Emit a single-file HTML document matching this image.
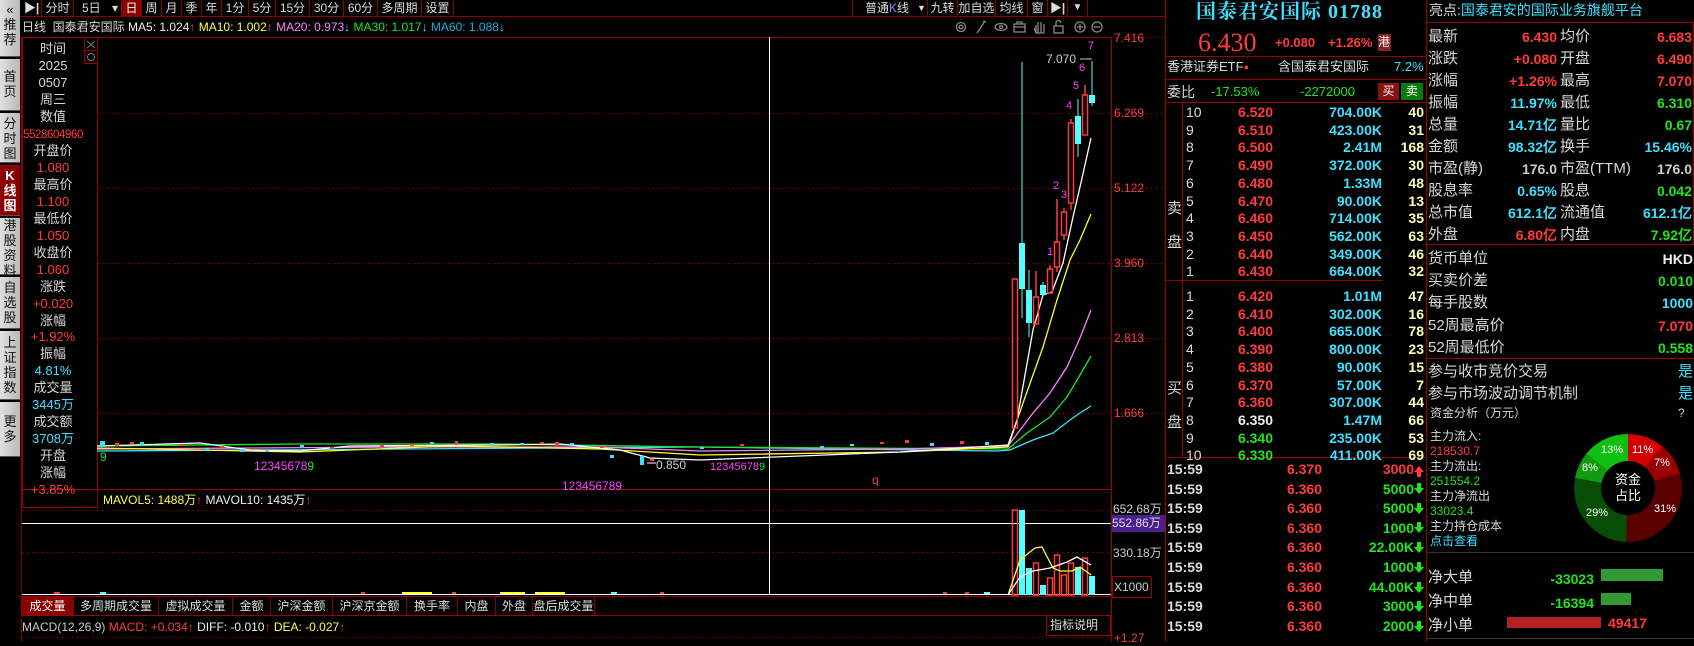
<!DOCTYPE html>
<html><head><meta charset="utf-8"><style>
*{margin:0;padding:0;box-sizing:border-box}
body{width:1694px;height:642px;background:#000;overflow:hidden;position:relative;font-family:"Liberation Sans","Noto Sans CJK SC",sans-serif;font-size:13px;color:#d8d8d8}
.a{position:absolute;white-space:nowrap;line-height:16px}
.r{text-align:right}
.c{text-align:center}
.red{color:#ff3b3b}.grn{color:#1ee61e}.cyn{color:#3de0ff}.yel{color:#ffff40}.wht{color:#f0f0f0}.pnk{color:#ff80ff}.mag{color:#ff40ff}.cnt{color:#ffffb8}
.nav{position:absolute;left:0;width:20px;background:linear-gradient(90deg,#e0e0e0,#b8b8b8);color:#111;font-size:13px;line-height:15px;text-align:center;padding-top:6px;border-bottom:1px solid #555}
.tb{position:absolute;top:0;height:16px;line-height:16px;border-right:1px solid #800;text-align:center;font-size:12px;color:#ddd;white-space:nowrap;overflow:hidden}
.tab{position:absolute;top:597px;height:18px;line-height:18px;border-right:1px solid #800;text-align:center;font-size:12px;color:#ddd}
.ob{font-size:14px;font-weight:bold;font-family:"Liberation Sans",sans-serif}
.rp{font-size:15px}
</style></head><body>

<div class="nav" style="top:0;height:57px;padding-top:2px">«<br>推<br>荐</div>
<div class="nav" style="top:59px;height:52px;padding-top:10px">首<br>页</div>
<div class="nav" style="top:113px;height:50px;padding-top:3px">分<br>时<br>图</div>
<div class="nav" style="top:165px;height:51px;padding-top:3px;background:#8b0000;color:#fff;font-weight:bold">K<br>线<br>图</div>
<div class="nav" style="top:218px;height:57px;padding-top:0px">港<br>股<br>资<br>料</div>
<div class="nav" style="top:277px;height:52px;padding-top:3px">自<br>选<br>股</div>
<div class="nav" style="top:331px;height:69px;padding-top:4px">上<br>证<br>指<br>数</div>
<div class="nav" style="top:402px;height:55px;padding-top:12px">更<br>多</div>

<svg class="a" style="left:0;top:0" width="1694" height="642">
<line x1="20" y1="16.5" x2="1165" y2="16.5" stroke="#800" />
<line x1="21.5" y1="37" x2="21.5" y2="642" stroke="#800"/>
<line x1="1111.5" y1="37" x2="1111.5" y2="642" stroke="#900"/>
<line x1="1165.5" y1="0" x2="1165.5" y2="642" stroke="#900"/>
<line x1="1426.5" y1="0" x2="1426.5" y2="642" stroke="#900"/>
<line x1="21" y1="37.5" x2="1111" y2="37.5" stroke="#800"/>
<line x1="21" y1="489.5" x2="1111" y2="489.5" stroke="#900"/>
<line x1="21" y1="596.5" x2="1111" y2="596.5" stroke="#900"/>
<line x1="21" y1="615.5" x2="1111" y2="615.5" stroke="#900"/>
<rect x="22.5" y="37.5" width="75" height="470" fill="none" stroke="#900"/>
<rect x="84.5" y="37.5" width="13" height="13" fill="none" stroke="#900"/>
<rect x="84.5" y="50.5" width="13" height="13" fill="none" stroke="#900"/>
<path d="M87 41 L95 48 M95 41 L87 48" stroke="#777"/>
<circle cx="91" cy="57" r="3.5" fill="none" stroke="#777"/>
<g stroke="#900" stroke-dasharray="1.5 3.5">
<line x1="98" y1="113.5" x2="1111" y2="113.5"/><line x1="98" y1="188.5" x2="1111" y2="188.5"/>
<line x1="98" y1="263.5" x2="1111" y2="263.5"/><line x1="98" y1="338.5" x2="1111" y2="338.5"/>
<line x1="98" y1="413.5" x2="1111" y2="413.5"/>
<line x1="22" y1="510.5" x2="1111" y2="510.5"/><line x1="22" y1="552.5" x2="1111" y2="552.5"/>
<line x1="22" y1="637.5" x2="1111" y2="637.5"/>
<line x1="1111" y1="37.5" x2="1165" y2="37.5"/><line x1="1111" y1="113.5" x2="1165" y2="113.5"/>
<line x1="1111" y1="188.5" x2="1165" y2="188.5"/><line x1="1111" y1="263.5" x2="1165" y2="263.5"/>
<line x1="1111" y1="338.5" x2="1165" y2="338.5"/><line x1="1111" y1="413.5" x2="1165" y2="413.5"/>
</g>
<line x1="769.5" y1="37" x2="769.5" y2="595" stroke="#fff"/>
<line x1="22" y1="523.5" x2="1111" y2="523.5" stroke="#fff"/>
<line x1="22" y1="594.5" x2="1111" y2="594.5" stroke="#fff"/>
<g fill="none" stroke-width="1.3">
<polyline stroke="#3de0ff" points="97,451 400,449 700,447 997,451 1010,450 1033,440 1053,433 1070,420 1080,413 1091,406"/>
<polyline stroke="#1ee61e" points="97,446 300,444 500,444 700,447 1008,449 1027,433 1050,417 1067,397 1080,375 1091,356"/>
<polyline stroke="#ff80ff" points="97,449 250,448 400,447 600,447 700,451 900,449 1008,446 1033,413 1050,393 1067,367 1080,338 1091,310"/>
<polyline stroke="#ffff30" points="97,448 250,451 300,452 450,446 600,449 700,455 900,452 1008,447 1023,403 1043,347 1057,300 1070,260 1080,240 1091,214"/>
<polyline stroke="#fff" points="97,446 200,443 250,450 300,451 350,446 500,445 560,444 620,450 650,458 700,460 800,456 900,452 1008,445 1017,420 1033,330 1043,295 1052,292 1063,263 1073,217 1080,187 1091,138"/>
</g>
<g fill="#ff3b3b">
<rect x="115" y="443" width="4" height="3"/><rect x="130" y="442" width="4" height="2"/><rect x="180" y="444" width="4" height="2"/>
<rect x="220" y="446" width="4" height="2"/><rect x="330" y="447" width="4" height="2"/><rect x="380" y="445" width="4" height="2"/>
<rect x="410" y="444" width="4" height="2"/><rect x="455" y="441" width="3" height="4"/><rect x="540" y="442" width="4" height="2"/>
<rect x="555" y="442" width="4" height="4"/><rect x="600" y="446" width="4" height="2"/><rect x="650" y="459" width="4" height="2"/>
<rect x="740" y="444" width="4" height="2"/><rect x="880" y="442" width="4" height="2"/><rect x="905" y="440" width="4" height="3"/><rect x="960" y="441" width="4" height="3"/>
</g>
<g fill="#3de0ff">
<rect x="100" y="441" width="5" height="6"/><rect x="140" y="442" width="4" height="3"/><rect x="205" y="448" width="4" height="3"/>
<rect x="240" y="449" width="5" height="3"/><rect x="265" y="450" width="4" height="2"/><rect x="300" y="445" width="4" height="2"/>
<rect x="430" y="442" width="4" height="2"/><rect x="490" y="443" width="4" height="2"/><rect x="520" y="443" width="4" height="2"/>
<rect x="570" y="443" width="4" height="2"/><rect x="610" y="455" width="4" height="3"/><rect x="640" y="456" width="4" height="9"/>
<rect x="700" y="447" width="4" height="2"/><rect x="820" y="446" width="4" height="2"/><rect x="850" y="444" width="4" height="2"/>
<rect x="930" y="443" width="4" height="3"/><rect x="985" y="442" width="4" height="3"/>
</g>
<line x1="647" y1="463" x2="656" y2="463" stroke="#fff"/>
<g stroke="#ff3b3b" fill="none" stroke-width="1.5">
<rect x="1012.5" y="279" width="5" height="149"/>
<rect x="1033.5" y="297" width="5" height="27"/><line x1="1036" y1="271" x2="1036" y2="297"/>
<rect x="1047.5" y="269" width="5" height="24"/><line x1="1050" y1="265" x2="1050" y2="269"/>
<rect x="1054.5" y="242" width="5" height="25"/><line x1="1057" y1="199" x2="1057" y2="242"/><line x1="1057" y1="267" x2="1057" y2="272"/>
<rect x="1061.5" y="212" width="5" height="23"/><line x1="1064" y1="208" x2="1064" y2="212"/><line x1="1064" y1="235" x2="1064" y2="240"/>
<rect x="1068.5" y="123" width="5" height="80"/><line x1="1071" y1="119" x2="1071" y2="123"/><line x1="1071" y1="203" x2="1071" y2="210"/>
<rect x="1082.5" y="95" width="5" height="40"/><line x1="1085" y1="85" x2="1085" y2="95"/>
</g>
<g fill="#5ff">
<rect x="1019" y="243" width="6" height="46"/><rect x="1021.5" y="62" width="1" height="256"/>
<rect x="1026" y="290" width="6" height="33"/><rect x="1028.5" y="270" width="1" height="67"/>
<rect x="1040" y="285" width="6" height="10"/><rect x="1042.5" y="282" width="1" height="14"/>
<rect x="1075" y="116" width="6" height="28"/><rect x="1077.5" y="99" width="1" height="58"/>
<rect x="1089" y="95" width="6" height="8"/><rect x="1091.5" y="61" width="1" height="45"/>
</g>
<line x1="1080" y1="59" x2="1092" y2="59" stroke="#ccc"/>
<g stroke="#ff3b3b" fill="none" stroke-width="1.5">
<rect x="1012.5" y="510" width="5" height="85"/><rect x="1033.5" y="563" width="5" height="32"/>
<rect x="1047.5" y="578" width="5" height="17"/><rect x="1054.5" y="555" width="5" height="40"/>
<rect x="1061.5" y="575" width="5" height="20"/><rect x="1068.5" y="563" width="5" height="32"/><rect x="1082.5" y="558" width="5" height="37"/>
</g>
<g fill="#5ff">
<rect x="1019" y="510" width="6" height="85"/><rect x="1026" y="568" width="6" height="27"/><rect x="1040" y="585" width="6" height="10"/>
<rect x="1075" y="567" width="6" height="28"/><rect x="1089" y="576" width="6" height="19"/>
</g>
<g fill="#ff3b3b"><rect x="54" y="592" width="6" height="2"/><rect x="361" y="592" width="4" height="2"/><rect x="452" y="592" width="4" height="2"/><rect x="660" y="592" width="4" height="2"/><rect x="943" y="592" width="4" height="2"/><rect x="965" y="592" width="4" height="2"/></g>
<g fill="#ffff30"><rect x="402" y="592" width="30" height="2"/><rect x="500" y="592" width="25" height="2"/><rect x="535" y="592" width="30" height="2"/></g>
<g fill="#5ff"><rect x="100" y="592" width="6" height="2"/><rect x="611" y="592" width="6" height="2"/><rect x="984" y="592" width="6" height="2"/></g>
<polyline fill="none" stroke="#ffff30" stroke-width="1.3" points="1008,595 1020,560 1035,548 1042,547 1053,568 1060,571 1072,571 1080,567 1091,575"/>
<polyline fill="none" stroke="#fff" stroke-width="1.3" points="1008,595 1020,577 1033,571 1050,568 1067,562 1077,557 1091,565"/>
<g fill="none" stroke="#888" stroke-width="1.3">
<circle cx="961" cy="27" r="4.5"/><circle cx="961" cy="27" r="1.8"/>
<path d="M977 33 L985 21 M983 21 L986 22"/>
<ellipse cx="1001" cy="27" rx="6" ry="3.5"/><circle cx="1001" cy="27" r="1.5"/>
<rect x="1014" y="24" width="11" height="8"/><path d="M1017 24 v-2 h5 v2 M1014 27 h11"/>
<path d="M1036 33 v-8 M1038 33 v-11 M1041 33 v-11 M1044 33 v-9 M1034 28 l2 5 h8"/>
<rect x="1054" y="26" width="9" height="7"/><path d="M1056 26 v-3 a2.5 2.5 0 0 1 5 0"/>
<circle cx="1080" cy="27" r="5"/><path d="M1077 27 h6 M1080 24 v6"/>
<circle cx="1097" cy="27" r="5"/><path d="M1094 27 h6"/>
</g>
<g stroke="#900" fill="none">
<line x1="1165" y1="56.5" x2="1426" y2="56.5"/><line x1="1165" y1="79.5" x2="1426" y2="79.5"/><line x1="1165" y1="102.5" x2="1426" y2="102.5"/>
<line x1="1182.5" y1="103" x2="1182.5" y2="457"/><line x1="1165" y1="280.5" x2="1383" y2="280.5"/><line x1="1165" y1="457.5" x2="1426" y2="457.5"/>
<line x1="1426" y1="22.5" x2="1694" y2="22.5"/><rect x="1426.5" y="22.5" width="267" height="222"/>
<line x1="1426" y1="358.5" x2="1694" y2="358.5"/>
<line x1="1111" y1="516.5" x2="1165" y2="516.5"/><rect x="1112.5" y="576.5" width="39" height="21"/>
<rect x="1046.5" y="615.5" width="64" height="20"/>
</g>
<g stroke="#333"><line x1="1426" y1="552.5" x2="1694" y2="552.5"/><line x1="1426" y1="638.5" x2="1694" y2="638.5"/></g>
<g transform="translate(1628,488)">
<path d="M0 -54 A54 54 0 0 1 34.4 -41.6 L17.2 -20.8 A27 27 0 0 0 0 -27 Z" fill="#d40000"/>
<path d="M34.4 -41.6 A54 54 0 0 1 52.0 -14.6 L26 -7.3 A27 27 0 0 0 17.2 -20.8 Z" fill="#9a0000"/>
<path d="M52.0 -14.6 A54 54 0 0 1 -1.7 54 L-0.85 27 A27 27 0 0 0 26 -7.3 Z" fill="#5a0000"/>
<path d="M-1.7 54 A54 54 0 0 1 -53 -10.1 L-26.5 -5 A27 27 0 0 0 -0.85 27 Z" fill="#064d06"/>
<path d="M-53 -10.1 A54 54 0 0 1 -41.6 -34.4 L-20.8 -17.2 A27 27 0 0 0 -26.5 -5 Z" fill="#119a11"/>
<path d="M-41.6 -34.4 A54 54 0 0 1 0 -54 L0 -27 A27 27 0 0 0 -20.8 -17.2 Z" fill="#10c010"/>
</g>
<rect x="1601" y="569" width="62" height="12" fill="#339933"/>
<rect x="1601" y="593" width="30" height="12" fill="#339933"/>
<rect x="1507" y="617" width="94" height="11" fill="#b22222"/>
<g fill="#ff3b3b"><path d="M1414 472 l5 -6 l5 6 h-3 v5 h-4 v-5z"/></g>
<g fill="#1ee61e">
<path d="M1414 488 l5 6 l5 -6 h-3 v-5 h-4 v5z"/>
<path d="M1414 508 l5 6 l5 -6 h-3 v-5 h-4 v5z"/>
<path d="M1414 527 l5 6 l5 -6 h-3 v-5 h-4 v5z"/>
<path d="M1414 547 l5 6 l5 -6 h-3 v-5 h-4 v5z"/>
<path d="M1414 567 l5 6 l5 -6 h-3 v-5 h-4 v5z"/>
<path d="M1414 587 l5 6 l5 -6 h-3 v-5 h-4 v5z"/>
<path d="M1414 606 l5 6 l5 -6 h-3 v-5 h-4 v5z"/>
<path d="M1414 626 l5 6 l5 -6 h-3 v-5 h-4 v5z"/>
</g>
</svg>

<div class="tb" style="left:22px;width:20px;font-weight:bold">▶|</div>
<div class="tb" style="left:42px;width:32px">分时</div>
<div class="tb" style="left:74px;width:48px;text-align:left;padding-left:8px">5日 <span style="padding-left:8px">▾</span></div>
<div class="tb" style="left:122px;width:20px;background:#8b0000;color:#fff">日</div>
<div class="tb" style="left:142px;width:20px">周</div>
<div class="tb" style="left:162px;width:20px">月</div>
<div class="tb" style="left:182px;width:20px">季</div>
<div class="tb" style="left:202px;width:20px">年</div>
<div class="tb" style="left:222px;width:27px">1分</div>
<div class="tb" style="left:249px;width:27px">5分</div>
<div class="tb" style="left:276px;width:34px">15分</div>
<div class="tb" style="left:310px;width:34px">30分</div>
<div class="tb" style="left:344px;width:34px">60分</div>
<div class="tb" style="left:378px;width:44px">多周期</div>
<div class="tb" style="left:422px;width:32px">设置</div>
<div class="tb" style="left:852px;width:76px;border-left:1px solid #800;text-align:left;padding-left:12px">普通<span style="color:#88f">K</span>线</div>
<div class="a" style="left:917px;top:0;font-size:9px;color:#ddd">▼</div>
<div class="tb" style="left:928px;width:30px">九转</div>
<div class="tb" style="left:958px;width:38px">加自选</div>
<div class="tb" style="left:996px;width:32px">均线</div>
<div class="tb" style="left:1028px;width:20px">窗</div>
<div class="tb" style="left:1048px;width:20px;font-weight:bold">▶|</div>
<div class="tb" style="left:1068px;width:20px;font-size:10px">▼</div>

<div class="a" style="left:22px;top:19px;font-size:12px">日线 &nbsp;国泰君安国际 <span class="wht">MA5: 1.024</span><span class="red">↑</span> <span class="yel">MA10: 1.002</span><span class="red">↑</span> <span class="pnk">MA20: 0.973</span><span class="cyn">↓</span> <span class="grn">MA30: 1.017</span><span class="cyn">↓</span> <span style="color:#2ad">MA60: 1.088</span><span class="cyn">↓</span></div>

<div class="a c" style="left:22px;top:41px;width:62px;line-height:16.9px;font-size:13px">
时间<br>2025<br>0507<br>周三<br>数值<br><span class="red" style="font-size:11.5px;letter-spacing:-0.4px;display:inline-block;width:74px;margin-left:-6px;margin-right:-6px">5528604960</span><br>开盘价<br><span class="red">1.080</span><br>最高价<br><span class="red">1.100</span><br>最低价<br><span class="red">1.050</span><br>收盘价<br><span class="red">1.060</span><br>涨跌<br><span class="red">+0.020</span><br>涨幅<br><span class="red">+1.92%</span><br>振幅<br><span class="cyn">4.81%</span><br>成交量<br><span class="cyn">3445万</span><br>成交额<br><span class="cyn">3708万</span><br>开盘<br>涨幅<br><span class="red">+3.85%</span></div>

<div class="a grn" style="left:100px;top:449px;font-size:12px">9</div>
<div class="a" style="left:254px;top:458px;font-size:12px"><span class="mag">12345678</span><span class="grn">9</span></div>
<div class="a" style="left:710px;top:459px;font-size:11px"><span class="mag">12345678</span><span class="grn">9</span></div>
<div class="a mag" style="left:562px;top:478px;font-size:12px">123456789</div>
<div class="a" style="left:656px;top:457px;font-size:12px;color:#ccc">0.850</div>
<div class="a red" style="left:872px;top:472px;font-size:12px">q</div>
<div class="a" style="left:1046px;top:51px;font-size:12px;color:#ccc">7.070</div>
<div class="a mag" style="left:1047px;top:244px;font-size:11px">1</div>
<div class="a mag" style="left:1053px;top:178px;font-size:11px">2</div>
<div class="a mag" style="left:1061px;top:187px;font-size:11px">3</div>
<div class="a mag" style="left:1066px;top:98px;font-size:11px">4</div>
<div class="a mag" style="left:1073px;top:78px;font-size:11px">5</div>
<div class="a mag" style="left:1079px;top:60px;font-size:11px">6</div>
<div class="a mag" style="left:1088px;top:38px;font-size:11px">7</div>

<div class="a red" style="left:1114px;top:30px;font-size:12px">7.416</div>
<div class="a red" style="left:1114px;top:105px;font-size:12px">6.269</div>
<div class="a red" style="left:1114px;top:180px;font-size:12px">5.122</div>
<div class="a red" style="left:1114px;top:255px;font-size:12px">3.960</div>
<div class="a red" style="left:1114px;top:330px;font-size:12px">2.813</div>
<div class="a red" style="left:1114px;top:405px;font-size:12px">1.666</div>
<div class="a" style="left:1113px;top:501px;font-size:12px;color:#ccc">652.68万</div>
<div class="a" style="left:1112px;top:515px;width:53px;height:17px;background:#4b1f8f;color:#ddd;font-size:12px">552.86万</div>
<div class="a" style="left:1113px;top:545px;font-size:12px;color:#ccc">330.18万</div>
<div class="a" style="left:1114px;top:579px;font-size:12px;color:#ccc">X1000</div>
<div class="a red" style="left:1114px;top:630px;font-size:12px">+1.27</div>

<div class="a" style="left:103px;top:492px;font-size:12px"><span class="yel">MAVOL5: 1488万</span><span class="red">↑</span> <span class="wht">MAVOL10: 1435万</span><span class="red">↑</span></div>
<div class="tab" style="left:22px;width:52px;background:#8b0000;color:#fff">成交量</div>
<div class="tab" style="left:74px;width:85px">多周期成交量</div>
<div class="tab" style="left:159px;width:74px">虚拟成交量</div>
<div class="tab" style="left:233px;width:38px">金额</div>
<div class="tab" style="left:271px;width:62px">沪深金额</div>
<div class="tab" style="left:333px;width:74px">沪深京金额</div>
<div class="tab" style="left:407px;width:51px">换手率</div>
<div class="tab" style="left:458px;width:38px">内盘</div>
<div class="tab" style="left:496px;width:37px">外盘</div>
<div class="tab" style="left:533px;width:62px">盘后成交量</div>
<div class="a" style="left:22px;top:619px;font-size:12px"><span style="color:#ccc">MACD(12,26,9)</span> <span class="red">MACD: +0.034↑</span> <span class="wht">DIFF: -0.010</span><span class="red">↑</span> <span class="yel">DEA: -0.027</span><span class="red">↑</span></div>
<div class="a" style="left:1050px;top:617px;font-size:12px;color:#ddd">指标说明</div>

<div class="a cyn" style="left:1196px;top:1px;font-size:20px;line-height:22px;font-family:'Liberation Serif','Noto Serif CJK SC',serif;font-weight:bold;letter-spacing:1px">国泰君安国际 01788</div>
<div class="a red" style="left:1198px;top:29px;font-size:26px;line-height:28px;font-family:'Liberation Serif',serif">6.430</div>
<div class="a red" style="left:1275px;top:35px;font-size:13px;font-weight:bold">+0.080</div>
<div class="a red" style="left:1328px;top:35px;font-size:13px;font-weight:bold">+1.26%</div>
<div class="a" style="left:1378px;top:34px;width:13px;height:17px;background:#8b2020;color:#fff;font-size:12px">港</div>
<div class="a" style="left:1167px;top:59px;font-size:13px">香港证券ETF<span class="red" style="vertical-align:top;font-size:9px">●</span></div>
<div class="a" style="left:1278px;top:59px;font-size:13px">含国泰君安国际</div>
<div class="a cyn" style="left:1394px;top:59px;font-size:13px">7.2%</div>
<div class="a" style="left:1167px;top:84px;font-size:14px">委比</div>
<div class="a grn" style="left:1211px;top:84px;font-size:13px">-17.53%</div>
<div class="a grn" style="left:1300px;top:84px;font-size:13px">-2272000</div>
<div class="a c" style="left:1378px;top:83px;width:21px;height:17px;background:#8b1010;color:#fff;font-size:12px">买</div>
<div class="a c" style="left:1401px;top:83px;width:22px;height:17px;background:#0a7a0a;color:#fff;font-size:12px">卖</div>
<div class="a" style="left:1167px;top:192px;font-size:15px;line-height:34px">卖<br>盘</div>
<div class="a" style="left:1167px;top:372px;font-size:15px;line-height:34px">买<br>盘</div>

<div class="a ob" style="left:1186px;top:104px;line-height:17.7px;font-weight:normal;color:#ddd">10<br>9<br>8<br>7<br>6<br>5<br>4<br>3<br>2<br>1</div>
<div class="a ob red r" style="left:1220px;top:104px;width:53px;line-height:17.7px">6.520<br>6.510<br>6.500<br>6.490<br>6.480<br>6.470<br>6.460<br>6.450<br>6.440<br>6.430</div>
<div class="a ob cyn r" style="left:1300px;top:104px;width:82px;line-height:17.7px">704.00K<br>423.00K<br>2.41M<br>372.00K<br>1.33M<br>90.00K<br>714.00K<br>562.00K<br>349.00K<br>664.00K</div>
<div class="a ob cnt r" style="left:1385px;top:104px;width:39px;line-height:17.7px">40<br>31<br>168<br>30<br>48<br>13<br>35<br>63<br>46<br>32</div>

<div class="a ob" style="left:1186px;top:288px;line-height:17.7px;font-weight:normal;color:#ddd">1<br>2<br>3<br>4<br>5<br>6<br>7<br>8<br>9<br>10</div>
<div class="a ob r" style="left:1220px;top:288px;width:53px;line-height:17.7px"><span class="red">6.420<br>6.410<br>6.400<br>6.390<br>6.380<br>6.370<br>6.360</span><br><span class="wht">6.350</span><br><span class="grn">6.340<br>6.330</span></div>
<div class="a ob cyn r" style="left:1300px;top:288px;width:82px;line-height:17.7px">1.01M<br>302.00K<br>665.00K<br>800.00K<br>90.00K<br>57.00K<br>307.00K<br>1.47M<br>235.00K<br>411.00K</div>
<div class="a ob cnt r" style="left:1385px;top:288px;width:39px;line-height:17.7px">47<br>16<br>78<br>23<br>15<br>7<br>44<br>66<br>53<br>69</div>

<div class="a ob" style="left:1167px;top:460px;line-height:19.6px;color:#ddd">15:59<br>15:59<br>15:59<br>15:59<br>15:59<br>15:59<br>15:59<br>15:59<br>15:59</div>
<div class="a ob red r" style="left:1270px;top:460px;width:52px;line-height:19.6px">6.370<br>6.360<br>6.360<br>6.360<br>6.360<br>6.360<br>6.360<br>6.360<br>6.360</div>
<div class="a ob r" style="left:1340px;top:460px;width:74px;line-height:19.6px"><span class="red">3000</span><br><span class="grn">5000<br>5000<br>1000<br>22.00K<br>1000<br>44.00K<br>3000<br>2000</span></div>

<div class="a" style="left:1429px;top:2px;font-size:14px">亮点:<span class="cyn">国泰君安的国际业务旗舰平台</span></div>
<div class="a rp" style="left:1428px;top:26px;line-height:22px">最新<br>涨跌<br>涨幅<br>振幅<br>总量<br>金额<br>市盈(静)<br>股息率<br>总市值<br>外盘</div>
<div class="a rp ob r" style="left:1490px;top:26px;width:67px;line-height:22px;font-size:14px"><span class="red">6.430<br>+0.080<br>+1.26%</span><br><span class="cyn">11.97%<br>14.71亿<br>98.32亿</span><br><span style="color:#ccc">176.0</span><br><span class="cyn">0.65%<br>612.1亿</span><br><span class="red">6.80亿</span></div>
<div class="a rp" style="left:1560px;top:26px;line-height:22px">均价<br>开盘<br>最高<br>最低<br>量比<br>换手<br>市盈(TTM)<br>股息<br>流通值<br>内盘</div>
<div class="a rp ob r" style="left:1630px;top:26px;width:62px;line-height:22px;font-size:14px"><span class="red">6.683<br>6.490<br>7.070</span><br><span class="grn">6.310<br>0.67</span><br><span class="cyn">15.46%</span><br><span style="color:#ccc">176.0</span><br><span class="grn">0.042</span><br><span class="cyn">612.1亿</span><br><span class="grn">7.92亿</span></div>
<div class="a rp" style="left:1428px;top:248px;line-height:22.2px">货币单位<br>买卖价差<br>每手股数<br>52周最高价<br>52周最低价</div>
<div class="a ob r" style="left:1600px;top:248px;width:93px;line-height:22.2px;font-size:14px"><span class="wht">HKD</span><br><span class="grn">0.010</span><br><span class="cyn">1000</span><br><span class="red">7.070</span><br><span class="grn">0.558</span></div>
<div class="a rp" style="left:1428px;top:361px;line-height:22px">参与收市竞价交易<br>参与市场波动调节机制</div>
<div class="a rp cyn r" style="left:1660px;top:361px;width:33px;line-height:22px">是<br>是</div>
<div class="a" style="left:1430px;top:405px;font-size:12px">资金分析（万元）</div>
<div class="a" style="left:1678px;top:405px;font-size:12px">?</div>
<div class="a" style="left:1430px;top:429px;font-size:12px;line-height:15px">主力流入:<br><span class="red">218530.7</span><br>主力流出:<br><span class="grn">251554.2</span><br>主力净流出<br><span class="grn">33023.4</span><br>主力持仓成本<br><span class="cyn">点击查看</span></div>
<div class="a c" style="left:1608px;top:472px;width:40px;line-height:16px;font-size:13px;color:#fff">资金<br>占比</div>
<div class="a" style="left:1632px;top:442px;font-size:11px;color:#fff">11%</div>
<div class="a" style="left:1654px;top:455px;font-size:11px;color:#fff">7%</div>
<div class="a" style="left:1654px;top:501px;font-size:11px;color:#fff">31%</div>
<div class="a" style="left:1586px;top:505px;font-size:11px;color:#fff">29%</div>
<div class="a" style="left:1582px;top:460px;font-size:11px;color:#fff">8%</div>
<div class="a" style="left:1601px;top:442px;font-size:11px;color:#fff">13%</div>
<div class="a rp" style="left:1428px;top:566px;line-height:24px;font-size:15px">净大单<br>净中单<br>净小单</div>
<div class="a ob grn r" style="left:1540px;top:567px;width:54px;line-height:24px;font-size:14px">-33023<br>-16394</div>
<div class="a ob red" style="left:1608px;top:615px;font-size:14px">49417</div>
</body></html>
